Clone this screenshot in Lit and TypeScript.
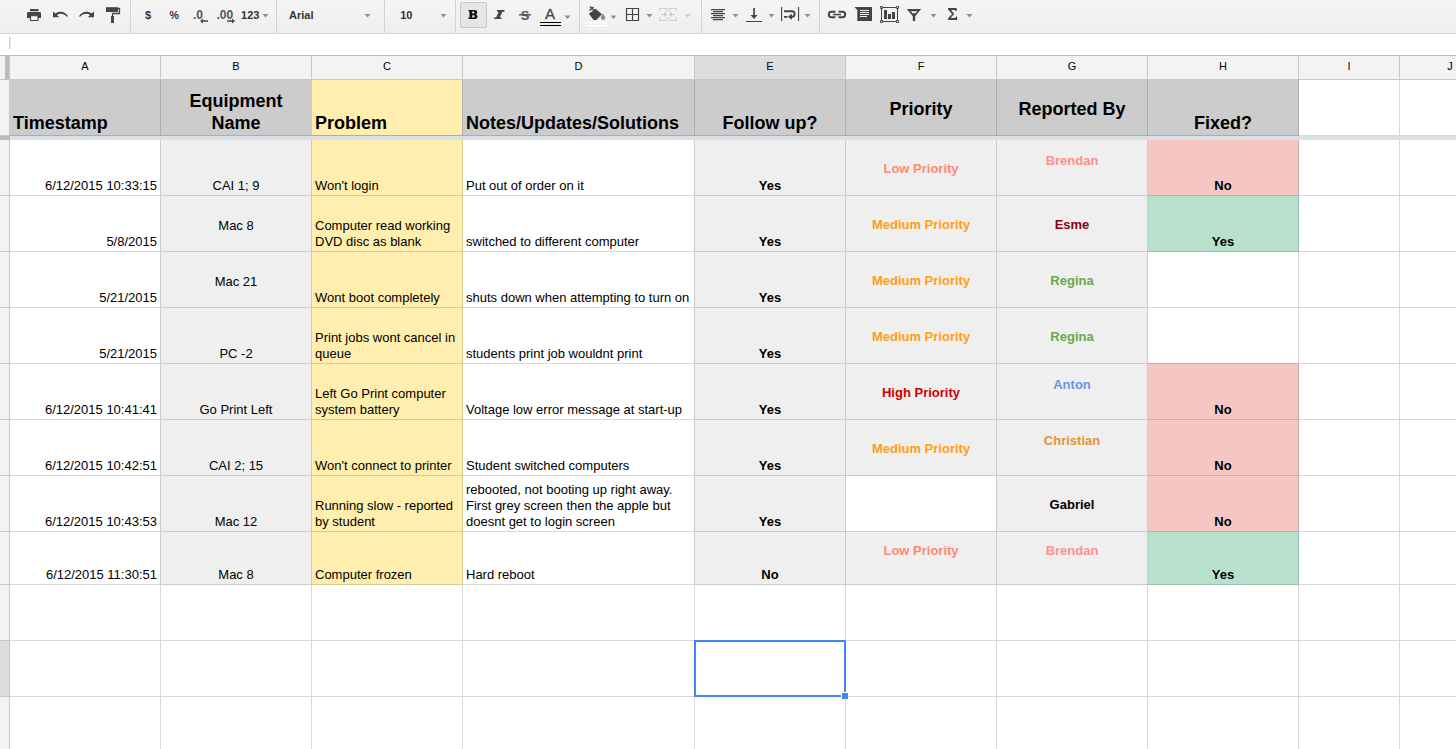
import { LitElement, html, svg, css, nothing } from "lit";
import { customElement } from "lit/decorators.js";
import { classMap } from "lit/directives/class-map.js";

type Cell = { t?: string; c?: string };

const caret = (x: number, y = 14, faded = false) =>
  svg`<path d="M${x - 3} ${y}h6l-3 3.4z" fill=${faded ? "#ccc" : "#8f8f8f"}/>`;

/* Every tool is a slot of the bar; drawings share the bar's coordinate system. */
const tools: { x: number; w: number; sep?: boolean; art: unknown }[] = [
  {
    x: 20, w: 28, art: svg`
      <rect x="30" y="9" width="8.5" height="2.2"/>
      <path d="M28.2 12h11.6q1.2 0 1.2 1.2V18h-3v-2H30v2h-3v-4.800q0-1.200 1.200-1.200z"/>
      <path d="M30.500 15.700h7.500v4.800h-7.500z" fill="#fafafa" stroke="#444" stroke-width="1.100"/>`,
  },
  {
    x: 48, w: 26, art: svg`<path d="M53 11.200v6h6.200l-2.300-2.200c3-2 7.500-1.500 10 1.800l1.200-.5c-2.600-5-8.500-6-12.800-2.900z"/>`,
  },
  {
    x: 74, w: 26, art: svg`<path d="M94 11.200v6h-6.200l2.300-2.200c-3-2-7.500-1.500-10 1.800l-1.200-.5c2.600-5 8.500-6 12.800-2.900z"/>`,
  },
  {
    x: 100, w: 31, sep: true, art: svg`
      <rect x="106" y="7.200" width="12" height="4.800"/>
      <path d="M118 8.500h1.500v5h-7v3" fill="none" stroke="#444" stroke-width="1.300"/>
      <rect x="111" y="16" width="3" height="7"/>`,
  },
  { x: 131, w: 30, art: svg`<text x="148" y="19" class="lbl mid">$</text>` },
  { x: 161, w: 26, art: svg`<text x="174.300" y="19" class="lbl mid" textLength="9.500" lengthAdjust="spacingAndGlyphs">%</text>` },
  {
    x: 187, w: 26, art: svg`<text x="193" y="19" class="dec">.0</text>
      <path d="M200 21l3-2.600v1.900h5v1.400h-5v1.900z"/>`,
  },
  {
    x: 213, w: 26, art: svg`<text x="216.500" y="19" class="dec">.00</text>
      <path d="M235 21l-3-2.600v1.900h-5v1.400h5v1.900z"/>`,
  },
  { x: 239, w: 38, sep: true, art: svg`<text x="250.200" y="19" class="lbl mid">123</text>${caret(265.5)}` },
  { x: 277, w: 108, sep: true, art: svg`<text x="289" y="19" class="lbl">Arial</text>${caret(367.5)}` },
  { x: 385, w: 71, sep: true, art: svg`<text x="406.300" y="19" class="lbl mid">10</text>${caret(443.5)}` },
  {
    x: 456, w: 33, art: svg`
      <rect x="460.500" y="2.500" width="26" height="25" rx="1.500" fill="#e6e6e6" stroke="#c6c6c6"/>
      <path fill="#111" fill-rule="evenodd" d="M468.500 10h6q2.700 0 2.700 2.400 0 1.500-1.200 2 1.500.5 1.500 2.200 0 2.400-2.800 2.400h-6.200v-1.500h1v-6h-1zM472.200 11.600v2h1.300q1 0 1-1t-1-1zM472.200 15.200v2.200h1.500q1.100 0 1.100-1.100t-1.100-1.100z"/>`,
  },
  { x: 489, w: 22, art: svg`<path d="M497 10h7.500v1.700h-2.100l-2.600 5.700h1.700V19h-7.500v-1.600h2.100l2.600-5.700h-1.700z"/>` },
  {
    x: 511, w: 27, art: svg`<text x="525" y="19.500" class="strike mid">S</text>
      <rect x="519" y="14.200" width="12" height="1.300"/>`,
  },
  {
    x: 538, w: 42, sep: true, art: svg`<text x="550" y="19" class="big mid">A</text>
      <path d="M540 22h21v1h-21zM540 25h21v1h-21z" fill="#000"/>${caret(567.5, 15.5)}`,
  },
  {
    x: 580, w: 43, art: svg`
      <path d="M588.800 13.800l6.700-5 6.500 5.500-5.700 5.700h-2.600z"/>
      <path d="M590 6.500l6.500 6M589.500 10.500l4-3.500" stroke="#444" stroke-width="1.500" fill="none"/>
      <path d="M603 13.500c1.500 2.200 2.200 3.400 2.200 4.400a2.100 2.100 0 0 1-4.300 0c0-1 .7-2.200 2.100-4.400z" fill="#888"/>
      <path d="M586 22h21v1.200h-21zM586 25h21v1.200h-21z" fill="#fff"/>${caret(613.5, 15.500)}`,
  },
  {
    x: 623, w: 33, art: svg`<path d="M626.500 8.500h12v12h-12zM632.500 8.500v12M626.500 14.500h12" fill="none" stroke="#444" stroke-width="1.200"/>${caret(649.5)}`,
  },
  {
    x: 656, w: 46, sep: true, art: svg`
      <path d="M667 11.500v-3h-7.500v3M659.500 17.500v3h7.500v-3M669.500 11.500v-3h7v3M669.500 17.500v3h7v-3" fill="none" stroke="#ccc"/>
      <path d="M661 14h3v-2l3.500 2.500-3.500 2.500v-2h-3zM675 14h-3v-2l-3.500 2.500 3.500 2.500v-2h3z" fill="#ccc"/>${caret(687.5, 14, true)}`,
  },
  {
    x: 702, w: 41, art: svg`<path d="M711 9h14v1.200h-14zM713 11h10v1.200h-10zM711 13h14v1.200h-14zM713 15h10v1.200h-10zM711 17h14v1.200h-14zM713 19h10v1.200h-10z"/>${caret(735.5)}`,
  },
  {
    x: 743, w: 36, art: svg`<path d="M753.200 8h1.700v7h2.600l-3.500 4-3.500-4h2.700zM746 21h16v1.100h-16z"/>${caret(771.5)}`,
  },
  {
    x: 779, w: 41, sep: true, art: svg`
      <path d="M781 7h1.100v14H781zM798 7h1.100v14H798z"/>
      <path d="M784 11.200h8.500a2.900 2.900 0 0 1 0 5.600h-2.500" fill="none" stroke="#444" stroke-width="1.900"/>
      <path d="M788 16.800l3.800-3.300v6.600zM784 16h3.500v1.700H784z"/>${caret(807.5)}`,
  },
  {
    x: 820, w: 31, art: svg`
      <path d="M835.500 11.800h-4a2.700 2.700 0 0 0 0 5.400h4M838.500 11.800h4a2.700 2.700 0 0 1 0 5.400h-4" fill="none" stroke="#444" stroke-width="2"/>
      <rect x="833" y="13.800" width="8" height="1.500"/>`,
  },
  {
    x: 851, w: 26, art: svg`<path d="M854.500 7H872v14h-14.700V10.200z"/>
      <path d="M860 10h9v1h-9zM860 12h9v1h-9zM860 14h9v1h-9zM860 16h7v1h-7z" fill="#f2f2f2"/>`,
  },
  {
    x: 877, w: 25, art: svg`
      <rect x="881.500" y="7.500" width="16" height="14" fill="none" stroke="#444"/>
      <path d="M884 10h3v9h-3zM888 14h3v5h-3zM892 12h3v7h-3z"/>
      <path d="M880.500 6.500h2v2h-2zM896.500 6.500h2v2h-2zM880.500 20.500h2v2h-2zM896.500 20.500h2v2h-2z" fill="#f2f2f2" stroke="#444"/>`,
  },
  {
    x: 902, w: 41, art: svg`<path fill-rule="evenodd" d="M906.800 9h14.400l-6 7.300V21h-2.400v-4.700zM910.800 11.300l1.600 2h3.200l1.600-2z"/>${caret(933.5)}`,
  },
  {
    x: 943, w: 40, art: svg`<path d="M948 8h8.700v3h-1.200l-.4-1.100h-4l3.100 4-3.600 4.100h4.800l.5-1.400h1.200V20H948v-1.500l4-4.600-4-4.500z"/>${caret(969.5)}`,
  },
];

const columns = ["A", "B", "C", "D", "E", "F", "G", "H", "I", "J"];

const pri = { low: "g m c b low", med: "g m c b med", high: "g m c b high" };
const yes: Cell = { t: "Yes", c: "g c b" };
const fixedNo: Cell = { t: "No", c: "red c b" };
const fixedYes: Cell = { t: "Yes", c: "green c b" };

const heading: Cell[] = [
  { t: "Timestamp", c: "head" },
  { t: "Equipment\nName", c: "head c next-y" },
  { t: "Problem", c: "head y" },
  { t: "Notes/Updates/Solutions", c: "head" },
  { t: "Follow up?", c: "head c" },
  { t: "Priority", c: "head c m" },
  { t: "Reported By", c: "head c m" },
  { t: "Fixed?", c: "head c" },
  {}, {},
];

const rows: Cell[][] = [
  [{ t: "6/12/2015 10:33:15", c: "r" }, { t: "CAI 1; 9", c: "g c next-y" }, { t: "Won't login", c: "y" }, { t: "Put out of order on it", c: "next-g" }, yes,
    { t: "Low Priority", c: pri.low }, { t: "Brendan", c: "g m c b up salmon" }, { ...fixedNo, c: "red c b next-green" }],
  [{ t: "5/8/2015", c: "r" }, { t: "Mac 8", c: "g c up next-y" }, { t: "Computer read working\nDVD disc as blank", c: "y" }, { t: "switched to different computer", c: "next-g" }, yes,
    { t: "Medium Priority", c: pri.med }, { t: "Esme", c: "g m c b wine" }, fixedYes],
  [{ t: "5/21/2015", c: "r" }, { t: "Mac 21", c: "g c up next-y" }, { t: "Wont boot completely", c: "y" }, { t: "shuts down when attempting to turn on", c: "next-g" }, yes,
    { t: "Medium Priority", c: pri.med }, { t: "Regina", c: "g m c b leaf" }, {}],
  [{ t: "5/21/2015", c: "r" }, { t: "PC -2", c: "g c next-y" }, { t: "Print jobs wont cancel in\nqueue", c: "y" }, { t: "students print job wouldnt print", c: "next-g" }, yes,
    { t: "Medium Priority", c: pri.med }, { t: "Regina", c: "g m c b leaf" }, { c: "next-red" }],
  [{ t: "6/12/2015 10:41:41", c: "r" }, { t: "Go Print Left", c: "g c next-y" }, { t: "Left Go Print computer\nsystem battery", c: "y" }, { t: "Voltage low error message at start-up", c: "next-g" }, yes,
    { t: "High Priority", c: pri.high }, { t: "Anton", c: "g m c b up sky" }, fixedNo],
  [{ t: "6/12/2015 10:42:51", c: "r" }, { t: "CAI 2; 15", c: "g c next-y" }, { t: "Won't connect to printer", c: "y" }, { t: "Student switched computers", c: "next-g" }, yes,
    { t: "Medium Priority", c: pri.med }, { t: "Christian", c: "g m c b up amber" }, fixedNo],
  [{ t: "6/12/2015 10:43:53", c: "r" }, { t: "Mac 12", c: "g c next-y" }, { t: "Running slow - reported\nby student", c: "y" },
    { t: "rebooted, not booting up right away.\nFirst grey screen then the apple but\ndoesnt get to login screen", c: "next-g" }, yes,
    { c: "over-g" }, { t: "Gabriel", c: "g m c b" }, { ...fixedNo, c: "red c b next-green" }],
  [{ t: "6/12/2015 11:30:51", c: "r" }, { t: "Mac 8", c: "g c next-y" }, { t: "Computer frozen", c: "y" }, { t: "Hard reboot", c: "next-g" }, { t: "No", c: "g c b" },
    { t: "Low Priority", c: pri.low + " up" }, { t: "Brendan", c: "g m c b up salmon" }, fixedYes],
  [], [], [],
];
const selected = { row: 9, col: 4 };

@customElement("tool-bar")
export class ToolBar extends LitElement {
  static styles = css`
    :host { display: flex; box-sizing: border-box; height: 34px; padding-left: 20px; border-bottom: 1px solid #d6d6d6; background: linear-gradient(#f5f5f5, #eee); }
    .tool { display: block; flex: none; box-sizing: border-box; height: 33px; fill: #444; }
    .lbl { font: bold 11px "Liberation Sans", Arial, sans-serif; fill: #333; }
    .dec { font: bold 12px "Liberation Sans", Arial, sans-serif; fill: #555; }
    .strike { font: bold 13px "Liberation Sans", Arial, sans-serif; fill: #555; }
    .big { font: 15px "Liberation Sans", Arial, sans-serif; fill: #444; stroke: #444; stroke-width: 0.3; }
    .mid { text-anchor: middle; }
  `;
  render() {
    return tools.map(
      (t) => html`<svg class="tool" width=${t.w} height="33" viewBox="${t.x} 0 ${t.w} 33">
        ${t.art}${t.sep ? svg`<rect x=${t.x + t.w - 1} y="0" width="1" height="33" fill="#d2d2d2"/>` : nothing}
      </svg>`
    );
  }
}

@customElement("sheet-grid")
export class SheetGrid extends LitElement {
  static styles = css`
    :host { display: block; width: 1501px; }
    .grid { display: grid; grid-template-columns: 10px 151px 151px 151px 232px 151px 151px 151px 151px 101px 101px; }
    .names { grid-auto-rows: 24px; }
    .body { grid-auto-rows: 56px; }
    .data { grid-template-rows: repeat(7, 56px) 53px repeat(3, 56px); }
    .name, .num, .corner, .cell { box-sizing: border-box; border-right: 1px solid #c8c8c8; border-bottom: 1px solid #c8c8c8; }
    .name { background: #f3f3f3; font-size: 11px; line-height: 21px; text-align: center; }
    .name.on, .num.on { background: #ddd; }
    .corner { display: flex; justify-content: flex-end; background: #f3f3f3; }
    .corner-bar { width: 4px; background: #bbb; }
    .num { background: #f3f3f3; }
    .cell { position: relative; display: flex; flex-direction: column; justify-content: flex-end; padding: 0 3px 1px; background: #fff; border-color: #d9d9d9; line-height: 16px; white-space: pre; }
    .r { text-align: right; border-right-color: #ccc; }
    .c { text-align: center; }
    .b { font-weight: bold; }
    .g { background: #efefef; border-color: #ccc; }
    .y { background: #ffeead; border-color: #d8ca93; }
    .red { background: #f4c7c3; border-color: #cfa9a6; }
    .green { background: #b7e1cd; border-color: #9bbfae; }
    .next-green { border-bottom-color: #9bbfae; }
    .next-red { border-bottom-color: #cfa9a6; }
    .next-g { border-right-color: #ccc; }
    .over-g { border-color: #ccc; }
    .head { background: #ccc; border-color: #adadad; font-size: 18px; font-weight: bold; line-height: 22px; }
    .head.y { background: #ffeead; border-color: #adadad; }
    .next-y { border-right-color: #d8ca93; }
    .m { justify-content: center; padding-top: 2px; padding-bottom: 0; }
    .up { padding-bottom: 17px; }
    .m.up { padding-bottom: 16px; }
    .low { color: #ff8a73; }
    .salmon { color: #fe9189; }
    .med { color: #ff9e14; }
    .high { color: #cc0000; }
    .wine { color: #8b000c; }
    .leaf { color: #6aa84f; }
    .sky { color: #6d96e4; }
    .amber { color: #e69138; }
    .freeze { display: flex; height: 4px; background: #dadfe8; }
    .freeze-handle { width: 10px; background: #bbb; }
    .selection { position: absolute; z-index: 1; inset: -1px; border: 2px solid #4285f4; }
    .fill-handle { position: absolute; right: -4px; bottom: -4px; width: 6px; height: 6px; border: solid #fff; border-width: 1px 0 0 1px; background: #4285f4; }
  `;
  private cell(cell: Cell = {}, on = false) {
    return html`<div class="cell ${cell.c ?? ""}">${cell.t ? html`<span>${cell.t}</span>` : nothing}${on
      ? html`<div class="selection"><div class="fill-handle"></div></div>`
      : nothing}</div>`;
  }
  render() {
    return html`
      <div class="grid names">
        <div class="corner"><div class="corner-bar"></div></div>
        ${columns.map((n, i) => html`<div class=${classMap({ name: true, on: i === selected.col })}>${n}</div>`)}
      </div>
      <div class="grid body"><div class="num"></div>${heading.map((h) => this.cell(h))}</div>
      <div class="freeze"><div class="freeze-handle"></div></div>
      <div class="grid data">
        ${rows.map((row, r) => html`<div class=${classMap({ num: true, on: r === selected.row })}></div>
          ${columns.map((_, c) => this.cell(row[c], r === selected.row && c === selected.col))}`)}
      </div>`;
  }
}

@customElement("app-root")
export class AppRoot extends LitElement {
  static styles = css`
    :host { display: block; width: 100%; height: 100vh; overflow: hidden; background: #fff; color: #000; font: 13px "Liberation Sans", Arial, sans-serif; }
    .formula { box-sizing: border-box; display: flex; height: 22px; padding: 3px 0 6px 9px; border-bottom: 1px solid #bdbdbd; }
    .mark { width: 1px; background: #ccc; border-right: 1px solid #dcecf8; }
  `;
  render() {
    return html`<tool-bar></tool-bar>
      <div class="formula"><div class="mark"></div></div>
      <sheet-grid></sheet-grid>`;
  }
}
